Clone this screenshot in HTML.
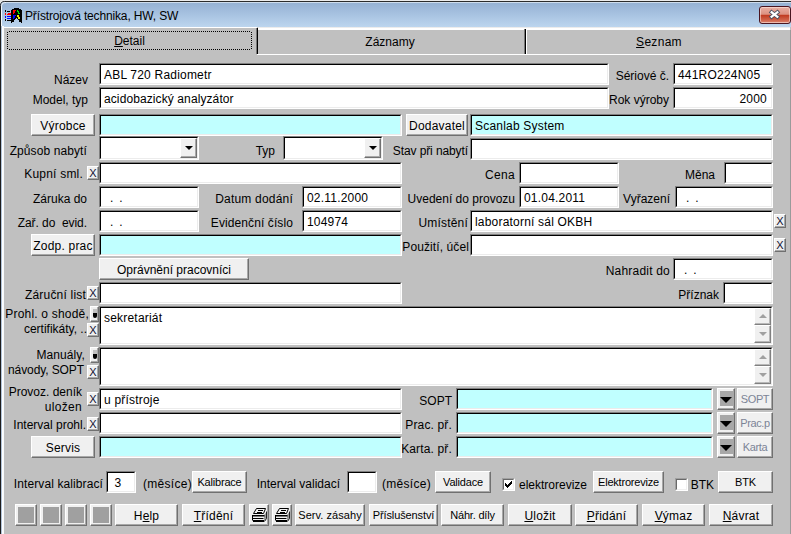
<!DOCTYPE html><html lang="cs"><head><meta charset="utf-8"><title>Přístrojová technika, HW, SW</title><style>
html,body{margin:0;padding:0;}
body{width:791px;height:534px;overflow:hidden;background:#c0c0c0;font-family:"Liberation Sans",Arial,sans-serif;font-size:12px;color:#000;}
#win{position:relative;width:791px;height:534px;overflow:hidden;background:#c0c0c0;}
#win>*{position:absolute;box-sizing:border-box;}
#tb{left:0;top:0;width:791px;height:27px;background:linear-gradient(#ececec 0,#ececec 1px,#2c2c2c 1px,#2c2c2c 2px,#cfdded 2px,#cfdded 3px,#96b2d4 3px,#a5c0df 13px,#b4cee9 22px,#bcd5ee 27px);}
#lb{left:0;top:26px;width:4px;height:508px;background:linear-gradient(90deg,#1c1c1c 0,#1c1c1c 1px,#b0c2d8 1px,#b0c2d8 2px,#fff 2px,#f4f8fc 4px);}
#lb2{left:0;top:6px;width:3px;height:20px;background:linear-gradient(90deg,#1c1c1c 0,#1c1c1c 1px,#9aa4b0 1px,#9aa4b0 1.500px,#f4f8fc 1.500px,#f4f8fc 2.500px,rgba(255,255,255,0) 2.500px);}
#rb{left:790px;top:30px;width:1px;height:504px;background:#9a9a9a;}
#corner{left:0;top:0;width:6px;height:7px;}
#title{left:25px;top:9px;font-size:12px;line-height:14px;white-space:nowrap;letter-spacing:-0.15px;}
#close{left:759px;top:6px;width:32px;height:18px;border:1px solid #4a1520;border-radius:3px;background:linear-gradient(#eab0a4,#dc9080 46%,#c0391f 50%,#cf6148 80%,#dc8470);box-shadow:inset 0 0 0 1px rgba(255,235,230,.55);overflow:hidden;}
#close svg{position:absolute;left:-1px;top:-1px;}
.tabhl{background:#fff;}
.tabsep{width:1px;background:#000;}
.tab{text-align:center;height:19px;line-height:19px;white-space:nowrap;}
.focus{background:
repeating-linear-gradient(90deg,#000 0,#000 1px,transparent 1px,transparent 2px) 2px 0/calc(100% - 4px) 1px no-repeat,
repeating-linear-gradient(90deg,#000 0,#000 1px,transparent 1px,transparent 2px) 2px 100%/calc(100% - 4px) 1px no-repeat,
repeating-linear-gradient(180deg,#000 0,#000 1px,transparent 1px,transparent 2px) 0 1px/1px calc(100% - 2px) no-repeat,
repeating-linear-gradient(180deg,#000 0,#000 1px,transparent 1px,transparent 2px) 100% 1px/1px calc(100% - 2px) no-repeat;}
.f{background:#fff;border-top:1px solid #808080;border-left:1px solid #808080;border-bottom:1px solid #fff;border-right:1px solid #fff;white-space:nowrap;overflow:hidden;line-height:18px;}
.f:before{content:"";position:absolute;left:0;top:0;right:0;bottom:0;border-top:1px solid #000;border-left:1px solid #000;border-right:1px solid #ececec;border-bottom:1px solid #ececec;pointer-events:none;}
.f span{position:relative;padding-left:4px;padding-right:5px;top:2px;letter-spacing:0.2px;}
.f.c{background:#c0ffff;}
.f.combo span{position:absolute;right:1px;top:1px;left:auto;width:17px;height:20px;padding:0;background:#f0f0f0;border-top:1px solid #fff;border-left:1px solid #fff;border-right:1px solid #707070;border-bottom:1px solid #707070;box-shadow:inset -1px -1px 0 #a8a8a8;box-sizing:border-box;}
.f.combo i{position:absolute;left:4px;top:7px;width:0;height:0;border-left:4px solid transparent;border-right:4px solid transparent;border-top:4px solid #000;}
.l{white-space:nowrap;line-height:14px;height:14px;}
.b{letter-spacing:0.2px;background:#f0f0f0;border-top:1px solid #fff;border-left:1px solid #fff;border-right:1px solid #707070;border-bottom:1px solid #707070;box-shadow:inset -1px -1px 0 #a8a8a8;text-align:center;white-space:nowrap;overflow:hidden;}
.b.s{font-size:11px;letter-spacing:-0.2px;}
.b.dis{color:#7c8496;font-size:11px;letter-spacing:-0.4px;}
.b.x{font-size:11px;color:#101030;letter-spacing:0;}
.b.memo i{position:absolute;left:2px;top:2px;width:4px;height:4px;background:#c0c0c0;}
.b.memo i:after{content:"";position:absolute;left:0;top:4px;width:4px;height:5px;background:#000;border-radius:0 0 2px 2px;}
.b.sq i{position:absolute;left:2px;top:2px;width:16px;height:16px;background:#a0a0a0;}
.b.pr svg{position:absolute;left:2px;top:3px;}
.sb{width:17px;height:17px;background:#f0f0f0;border-top:1px solid #fff;border-left:1px solid #fff;border-right:1px solid #808080;border-bottom:1px solid #808080;box-shadow:inset -1px -1px 0 #b8b8b8;}
.sb b{position:absolute;left:4px;top:5px;width:0;height:0;border-left:4px solid transparent;border-right:4px solid transparent;}
.sb b.up{border-bottom:4px solid #a0a0a0;}
.sb b.dn{border-top:4px solid #a0a0a0;top:6px;}
.dd{width:18px;height:22px;background:#f0f0f0;border-top:1px solid #fff;border-left:1px solid #fff;border-right:1px solid #707070;border-bottom:1px solid #707070;box-shadow:inset -1px -1px 0 #a8a8a8;}
.dd:before{content:"";position:absolute;left:2px;top:2px;width:13px;height:15px;background:#a8a8a8;}
.dd i{position:absolute;left:2px;top:8px;width:0;height:0;border-left:6.5px solid transparent;border-right:6.5px solid transparent;border-top:6px solid #000;}
.cb{width:13px;height:13px;background:#fff;border-top:1px solid #a0a0a0;border-left:1px solid #a0a0a0;border-right:1px solid #fff;border-bottom:1px solid #fff;}
.cb:before{content:"";position:absolute;left:0;top:0;right:0;bottom:0;border-top:1px solid #696969;border-left:1px solid #696969;border-right:1px solid #f0f0f0;border-bottom:1px solid #f0f0f0;}
.f.d span{letter-spacing:-0.3px;left:0;}

</style></head><body><div id="win">
<div id="tb"></div><div id="lb"></div><div id="lb2"></div><div id="rb"></div>
<svg id="icon" style="left:5px;top:8px" width="17" height="15" viewBox="0 0 17 15" shape-rendering="crispEdges"><path d="M9 0h5v1h2v1h1v13h-1v-1h-2v-2h-1v-1h-1v-1h-1v1h-1v1h-1v2h-2v1h-1v-13h1v-1h2z" fill="#000"/><path d="M8 2h3v1h-1v2h-1v1h-1z" fill="#f00"/><path d="M12 2h1v1h1v2h1v1h-2v-2h-1z" fill="#0d0"/><path d="M8 7h3v1h-1v2h-1v1h-1z" fill="#00f"/><path d="M12 7h2v2h1v2h-2v-2h-1z" fill="#ee0"/><path d="M0 2h1v2h-1zM0 11h1v2h-1zM2 3h3v1h-3zM2 12h4v1h-4z" fill="#000"/><path d="M0 5h1v2h-1zM2 6h4v1h-4zM3 5h3v0.500h-3z" fill="#f00"/><path d="M0 8h1v2h-1zM2 8h4v1h-4zM2 9.500h4v1h-4z" fill="#00f"/></svg>

<svg id="corner" width="6" height="7" viewBox="0 0 6 7"><rect width="6" height="7" fill="#e6e6e6"/><path d="M0.500 7V5.500A4 4 0 0 1 4.500 1.500H6V7z" fill="#9ab5d6"/><path d="M0.500 7V5.500A4 4 0 0 1 4.500 1.500H6" fill="none" stroke="#222" stroke-width="1"/><path d="M1.600 7V5.700A3 3 0 0 1 4.600 2.600H6" fill="none" stroke="#f4f8fc" stroke-width="1"/></svg>

<div id="title">Přístrojová technika, HW, SW</div>
<div id="close"><svg width="32" height="18" viewBox="0 0 32 18"><path d="M12.6 6.2 L18.4 10.8 M18.4 6.2 L12.6 10.8" stroke="#4a4f60" stroke-width="4" stroke-linecap="square"/><path d="M12.6 6.2 L18.4 10.8 M18.4 6.2 L12.6 10.8" stroke="#fff" stroke-width="2.2" stroke-linecap="square"/></svg></div>
<div class="tabhl" style="left:258px;top:27px;width:532px;height:3px;background:linear-gradient(#ececec 0,#ececec 1px,#fff 1px);"></div>
<div class="tabhl" style="left:257px;top:54px;width:533px;height:1px;"></div>
<div class="tabhl" style="left:4px;top:27px;width:253px;height:1px;"></div>
<div class="tabsep" style="left:256px;top:28px;height:26px;width:2px;background:linear-gradient(90deg,#777 0,#777 1px,#000 1px);"></div>
<div class="tabsep" style="left:524px;top:29px;height:25px;width:3px;background:linear-gradient(90deg,#777 0,#777 1px,#000 1px,#000 2px,#fff 2px);"></div>
<div class="focus" style="left:7px;top:31px;width:245px;height:19px;"></div>
<div class="tab" style="left:7px;top:32px;width:245px;"><u>D</u>etail</div>
<div class="tab" style="left:257px;top:33px;width:266px;">Záznamy</div>
<div class="tab" style="left:528px;top:33px;width:262px;letter-spacing:0.3px;"><u>S</u>eznam</div>
<div class="l " style="right:703px;top:73px;">Název</div>
<div class="f " style="left:99px;top:63px;width:510px;height:22px;"><span>ABL 720 Radiometr</span></div>
<div class="l " style="right:122px;top:69px;">Sériové č.</div>
<div class="f " style="left:673px;top:63px;width:100px;height:22px;"><span>441RO224N05</span></div>
<div class="l " style="right:703px;top:93px;">Model, typ</div>
<div class="f " style="left:99px;top:87px;width:510px;height:22px;"><span><b style="font-weight:normal;letter-spacing:0.1px">acidobazický analyzátor</b></span></div>
<div class="l " style="right:122px;top:93px;">Rok výroby</div>
<div class="f " style="left:673px;top:87px;width:100px;height:22px;text-align:right;"><span>2000</span></div>
<div class="b " style="left:31px;top:114px;width:64px;height:22px;line-height:22px;">Výrobce</div>
<div class="f c" style="left:99px;top:114px;width:303px;height:22px;"><span></span></div>
<div class="b " style="left:406px;top:114px;width:62px;height:22px;line-height:22px;">Dodavatel</div>
<div class="f c" style="left:470px;top:114px;width:303px;height:22px;"><span>Scanlab System</span></div>
<div class="l " style="right:704px;top:144px;letter-spacing:0.1px;">Způsob nabytí</div>
<div class="f combo" style="left:99px;top:136px;width:100px;height:24px;"><span><i></i></span></div>
<div class="l " style="right:516px;top:144px;">Typ</div>
<div class="f combo" style="left:283px;top:136px;width:100px;height:24px;"><span><i></i></span></div>
<div class="l " style="right:323px;top:144px;letter-spacing:-0.1px;">Stav při nabytí</div>
<div class="f " style="left:470px;top:138px;width:303px;height:22px;"><span></span></div>
<div class="l " style="right:708px;top:167px;letter-spacing:0.2px;">Kupní sml.</div>
<div class="b x" style="left:87px;top:166px;width:12px;height:14px;line-height:12px;">X</div>
<div class="f " style="left:99px;top:162px;width:303px;height:22px;"><span></span></div>
<div class="l " style="right:276px;top:168px;letter-spacing:0.3px;">Cena</div>
<div class="f " style="left:519px;top:162px;width:100px;height:22px;"><span></span></div>
<div class="l " style="right:76px;top:168px;">Měna</div>
<div class="f " style="left:724px;top:162px;width:49px;height:22px;"><span></span></div>
<div class="l " style="right:704px;top:192px;">Záruka do</div>
<div class="f d" style="left:99px;top:186px;width:100px;height:22px;"><span>&nbsp; . &nbsp;.</span></div>
<div class="l " style="right:498px;top:192px;letter-spacing:0.2px;">Datum dodání</div>
<div class="f " style="left:302px;top:186px;width:100px;height:22px;"><span>02.11.2000</span></div>
<div class="l " style="right:276px;top:192px;">Uvedení do provozu</div>
<div class="f " style="left:519px;top:186px;width:100px;height:22px;"><span>01.04.2011</span></div>
<div class="l " style="right:121px;top:192px;">Vyřazení</div>
<div class="f d" style="left:675px;top:186px;width:98px;height:22px;"><span>&nbsp; . &nbsp;.</span></div>
<div class="l " style="right:704px;top:216px;letter-spacing:-0.05px;">Zař. do&nbsp; evid.</div>
<div class="f d" style="left:99px;top:210px;width:100px;height:22px;"><span>&nbsp; . &nbsp;.</span></div>
<div class="l " style="right:498px;top:216px;letter-spacing:0.1px;">Evidenční číslo</div>
<div class="f " style="left:302px;top:210px;width:100px;height:22px;"><span>104974</span></div>
<div class="l " style="right:323px;top:216px;letter-spacing:0.2px;">Umístění</div>
<div class="f " style="left:470px;top:210px;width:303px;height:22px;"><span>laboratorní sál OKBH</span></div>
<div class="b x" style="left:774px;top:214px;width:12px;height:14px;line-height:12px;">X</div>
<div class="b " style="left:31px;top:234px;width:64px;height:22px;line-height:22px;">Zodp. prac</div>
<div class="f c" style="left:99px;top:234px;width:303px;height:22px;"><span></span></div>
<div class="l " style="right:322px;top:240px;letter-spacing:0.1px;">Použití, účel</div>
<div class="f " style="left:470px;top:234px;width:303px;height:22px;"><span></span></div>
<div class="b x" style="left:774px;top:238px;width:12px;height:14px;line-height:12px;">X</div>
<div class="b " style="left:99px;top:258px;width:150px;height:22px;line-height:22px;"><span style="letter-spacing:0">Oprávnění pracovníci</span></div>
<div class="l " style="right:121px;top:264px;letter-spacing:0.2px;">Nahradit do</div>
<div class="f d" style="left:673px;top:258px;width:100px;height:22px;"><span>&nbsp; . &nbsp;.</span></div>
<div class="l " style="right:705px;top:288px;letter-spacing:0.2px;">Záruční list</div>
<div class="b x" style="left:87px;top:286px;width:12px;height:14px;line-height:12px;">X</div>
<div class="f " style="left:99px;top:282px;width:303px;height:22px;"><span></span></div>
<div class="l " style="right:72px;top:288px;">Příznak</div>
<div class="f " style="left:723px;top:282px;width:50px;height:22px;"><span></span></div>
<div class="l " style="right:702px;top:307px;letter-spacing:0.2px;">Prohl. o shodě,</div>
<div class="l " style="right:704px;top:322px;">certifikáty, ..</div>
<div class="b memo" style="left:90px;top:306px;width:9px;height:16px;"><i></i></div>
<div class="b x" style="left:87px;top:323px;width:12px;height:14px;line-height:12px;">X</div>
<div class="f ta" style="left:99px;top:306px;width:674px;height:39px;"><span>sekretariát</span></div>
<div class="sb" style="left:754px;top:308px;"><b class="up"></b></div>
<div class="sb" style="left:754px;top:325px;height:18px;"><b class="dn"></b></div>
<div class="l " style="right:706px;top:348px;letter-spacing:0.1px;">Manuály,</div>
<div class="l " style="right:707px;top:363px;letter-spacing:-0.1px;">návody, SOPT</div>
<div class="b memo" style="left:90px;top:347px;width:9px;height:16px;"><i></i></div>
<div class="b x" style="left:87px;top:365px;width:12px;height:14px;line-height:12px;">X</div>
<div class="f ta" style="left:99px;top:347px;width:674px;height:39px;"><span></span></div>
<div class="sb" style="left:754px;top:349px;"><b class="up"></b></div>
<div class="sb" style="left:754px;top:366px;height:18px;"><b class="dn"></b></div>
<div class="l " style="right:709px;top:385px;">Provoz. deník</div>
<div class="l " style="right:709px;top:400px;letter-spacing:0.3px;">uložen</div>
<div class="b x" style="left:87px;top:392px;width:12px;height:14px;line-height:12px;">X</div>
<div class="f " style="left:99px;top:388px;width:303px;height:22px;"><span>u přístroje</span></div>
<div class="l " style="right:339px;top:394px;">SOPT</div>
<div class="f c" style="left:456px;top:388px;width:257px;height:22px;"><span></span></div>
<div class="dd" style="left:717px;top:388px;"><i></i></div>
<div class="b dis" style="left:737px;top:388px;width:36px;height:22px;line-height:20px;">SOPT</div>
<div class="l " style="right:705px;top:418px;">Interval prohl.</div>
<div class="b x" style="left:87px;top:417px;width:12px;height:14px;line-height:12px;">X</div>
<div class="f " style="left:99px;top:412px;width:303px;height:22px;"><span></span></div>
<div class="l " style="right:339px;top:418px;letter-spacing:0.15px;">Prac. př.</div>
<div class="f c" style="left:456px;top:412px;width:257px;height:22px;"><span></span></div>
<div class="dd" style="left:717px;top:412px;"><i></i></div>
<div class="b dis" style="left:737px;top:412px;width:36px;height:22px;line-height:20px;">Prac.p</div>
<div class="b " style="left:31px;top:436px;width:64px;height:22px;line-height:22px;">Servis</div>
<div class="f c" style="left:99px;top:436px;width:303px;height:22px;"><span></span></div>
<div class="l " style="right:339px;top:442px;letter-spacing:0.15px;">Karta. př.</div>
<div class="f c" style="left:456px;top:436px;width:257px;height:22px;"><span></span></div>
<div class="dd" style="left:717px;top:436px;"><i></i></div>
<div class="b dis" style="left:737px;top:436px;width:36px;height:22px;line-height:20px;">Karta</div>
<div class="l " style="right:688px;top:477px;letter-spacing:0.1px;">Interval kalibrací</div>
<div class="f " style="left:106px;top:471px;width:30px;height:22px;"><span>&nbsp;3</span></div>
<div class="l " style="right:599px;top:477px;letter-spacing:0.3px;">(měsíce)</div>
<div class="b s" style="left:192px;top:471px;width:55px;height:22px;line-height:20px;">Kalibrace</div>
<div class="l " style="right:451px;top:477px;">Interval validací</div>
<div class="f " style="left:347px;top:471px;width:30px;height:22px;"><span></span></div>
<div class="l " style="right:360px;top:477px;letter-spacing:0.3px;">(měsíce)</div>
<div class="b s" style="left:435px;top:471px;width:56px;height:22px;line-height:20px;">Validace</div>
<div class="cb" style="left:502px;top:478px;"><svg width="9" height="9" viewBox="0 0 9 9" style="position:absolute;left:1px;top:1px" shape-rendering="crispEdges"><path d="M1 3h1v3h-1zM2 4h1v3h-1zM3 5h1v3h-1zM4 4h1v3h-1zM5 3h1v3h-1zM6 2h1v3h-1zM7 1h1v3h-1z" fill="#000"/></svg></div>
<div class="l " style="right:204px;top:478px;">elektrorevize</div>
<div class="b s" style="left:593px;top:471px;width:71px;height:22px;line-height:20px;">Elektrorevize</div>
<div class="cb" style="left:675px;top:478px;"></div>
<div class="l " style="right:77px;top:478px;">BTK</div>
<div class="b s" style="left:718px;top:471px;width:55px;height:22px;line-height:20px;">BTK</div>
<div class="b sq" style="left:15px;top:504px;width:22px;height:22px;"><i></i></div>
<div class="b sq" style="left:40px;top:504px;width:22px;height:22px;"><i></i></div>
<div class="b sq" style="left:65px;top:504px;width:22px;height:22px;"><i></i></div>
<div class="b sq" style="left:90px;top:504px;width:22px;height:22px;"><i></i></div>
<div class="b " style="left:115px;top:504px;width:63px;height:22px;line-height:22px;">H<u>e</u>lp</div>
<div class="b " style="left:182px;top:504px;width:63px;height:22px;line-height:22px;"><u>T</u>řídění</div>
<div class="b pr" style="left:249px;top:504px;width:20px;height:22px;"><svg width="15" height="14" viewBox="0 0 15 14"><path d="M12 7L14.500 4V10.500L12 13.500z" fill="#9a9a9a"/><path d="M14.500 3.500V10.500L12.500 13.500" fill="none" stroke="#222" stroke-width="1"/><path d="M4.500 0.500H13.500L11.500 5.500H1.500z" fill="#f4f4f4" stroke="#000" stroke-width="1"/><path d="M6 2.500H11M5 4.500H10" stroke="#000" stroke-width="1"/><path d="M0 7h12.500v1.600H0zM0 10h11.500v1H0zM1 12h11v2H1z" fill="#000"/><path d="M0.500 7V12.500" stroke="#000" stroke-width="1"/></svg></div>
<div class="b pr" style="left:272px;top:504px;width:20px;height:22px;"><svg width="15" height="14" viewBox="0 0 15 14"><path d="M12 7L14.500 4V10.500L12 13.500z" fill="#9a9a9a"/><path d="M14.500 3.500V10.500L12.500 13.500" fill="none" stroke="#222" stroke-width="1"/><path d="M4.500 0.500H13.500L11.500 5.500H1.500z" fill="#f4f4f4" stroke="#000" stroke-width="1"/><path d="M6 2.500H11M5 4.500H10" stroke="#000" stroke-width="1"/><path d="M0 7h12.500v1.600H0zM0 10h11.500v1H0zM1 12h11v2H1z" fill="#000"/><path d="M0.500 7V12.500" stroke="#000" stroke-width="1"/></svg></div>
<div class="b s" style="left:295px;top:504px;width:70px;height:22px;line-height:20px;"><span style="letter-spacing:0.05px">Serv. zásahy</span></div>
<div class="b s" style="left:369px;top:504px;width:69px;height:22px;line-height:20px;"><span style="letter-spacing:-0.1px">Příslušenství</span></div>
<div class="b s" style="left:441px;top:504px;width:63px;height:22px;line-height:20px;">Náhr. díly</div>
<div class="b " style="left:508px;top:504px;width:64px;height:22px;line-height:22px;"><u>U</u>ložit</div>
<div class="b " style="left:575px;top:504px;width:63px;height:22px;line-height:22px;"><u>P</u>řidání</div>
<div class="b " style="left:642px;top:504px;width:63px;height:22px;line-height:22px;"><u>V</u>ýmaz</div>
<div class="b " style="left:709px;top:504px;width:64px;height:22px;line-height:22px;"><u>N</u>ávrat</div>
</div></body></html>
